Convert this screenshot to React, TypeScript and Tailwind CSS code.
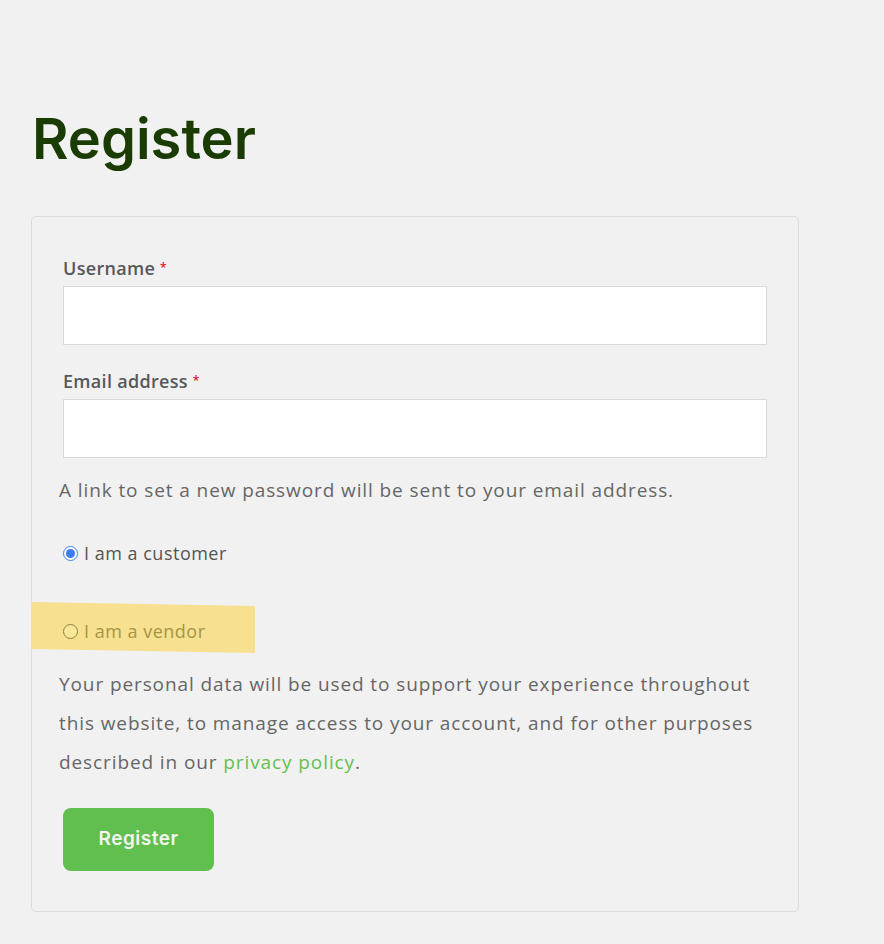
import { useState } from 'react';

function Label({ children }: { children: React.ReactNode }) {
  return (
    <label className="block text-[18px] font-semibold leading-[24px] text-[#585858] tracking-[0.3px]">
      {children} <span className="text-[#e2201d] text-[12px] align-top">*</span>
    </label>
  );
}

export default function App() {
  const [role, setRole] = useState('customer');

  return (
    <div className="min-h-[944px] bg-[#f1f1f1] pl-[31px] pt-[104px] font-['Open_Sans',sans-serif]">
      <h1 className="font-['Inter',sans-serif] text-[56px] font-semibold leading-[70px] tracking-[0px] text-[#1a3c02] ml-[1px]">
        Register
      </h1>

      <form className="mt-[42px] w-[768px] rounded-[5px] border border-[#dcdcdc] px-[31px] pt-[39px] pb-[40px]">
        <Label>Username</Label>
        <input className="mt-[6px] block h-[59px] w-[704px] border border-[#d9d9d9] bg-white" />

        <div className="mt-[24px]">
          <Label>Email address</Label>
        </div>
        <input className="mt-[6px] block h-[59px] w-[704px] border border-[#d9d9d9] bg-white" />

        <p className="-ml-[4px] mt-[17px] text-[19px] leading-[30px] tracking-[0.9px] text-[#666]">
          A link to set a new password will be sent to your email address.
        </p>

        <label className="mt-[35px] flex items-center gap-[6px] text-[18px] font-medium tracking-[0.5px] text-[#555]">
          <input
            type="radio"
            checked={role === 'customer'}
            onChange={() => setRole('customer')}
            className="m-0 h-[15px] w-[15px] accent-[#3b7cf0]"
          />
          I am a customer
        </label>

        <div className="relative mt-[51px]">
          <div className="absolute -left-[32px] -top-[16px] h-[47px] w-[224px] origin-left skew-y-[1deg] bg-[#f7e08f]" />
          <label className="relative flex items-center gap-[6px] text-[18px] font-medium tracking-[0.5px] text-[#a49447]">
            <span className="box-border h-[15px] w-[15px] rounded-full border border-[#8c8040] bg-[#f9e79a]" />
            I am a vendor
          </label>
        </div>

        <p className="-ml-[4px] mt-[20px] text-[19px] leading-[39px] tracking-[0.9px] text-[#666]">
          Your personal data will be used to support your experience throughout this website, to manage access to your account, and for other purposes described in our{' '}
          <a className="text-[#63c04f]">privacy policy</a>.
        </p>

        <button
          type="button"
          className="mt-[26px] h-[63px] w-[151px] rounded-[8px] bg-[#61bf4f] font-['Inter',sans-serif] text-[19px] font-semibold tracking-[0.5px] text-[#f1f5ee]"
        >
          Register
        </button>
      </form>
    </div>
  );
}
